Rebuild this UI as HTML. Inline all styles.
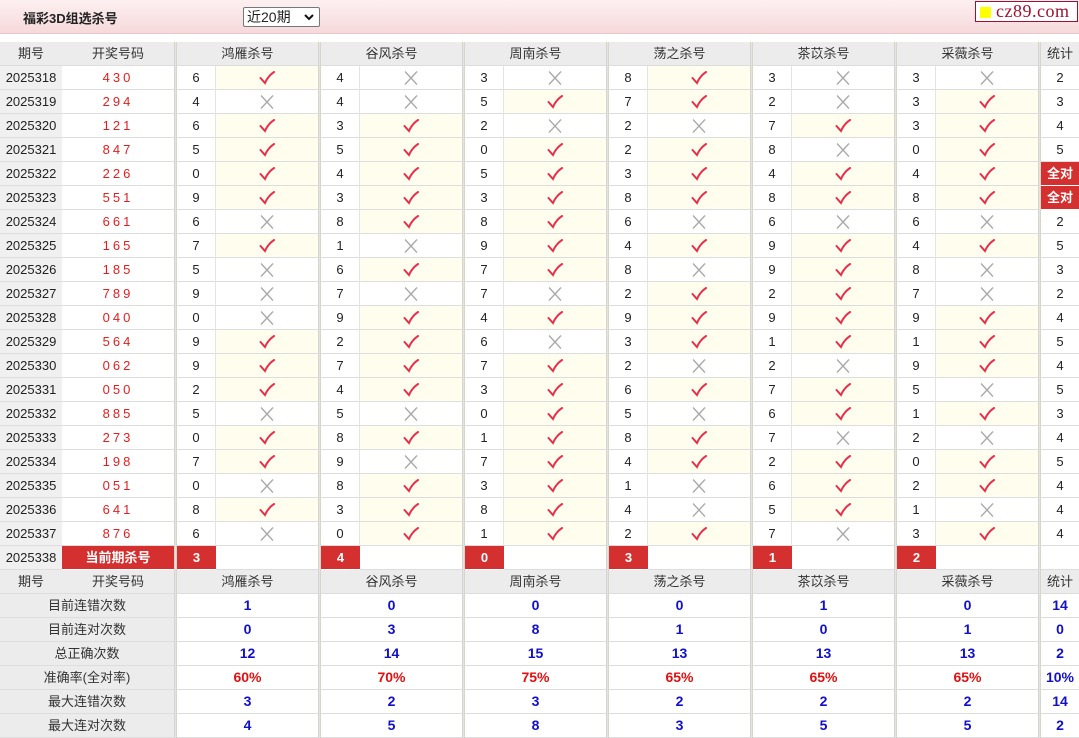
<!DOCTYPE html>
<html><head><meta charset="utf-8">
<style>
*{margin:0;padding:0;box-sizing:border-box}
body{width:1079px;height:737px;overflow:hidden;background:#fff;font-family:"Liberation Sans","Noto Sans CJK SC",sans-serif;font-size:13px;color:#222}
.top{position:absolute;left:0;top:0;width:1079px;height:34px;background:linear-gradient(#fdf0f1,#f6d9db);border-bottom:1px solid #e6c6c8}
.tt{position:absolute;left:23px;top:8px;font-weight:bold;font-size:13px;color:#222}
.sel{position:absolute;left:243px;top:7px;width:77px;height:20px;border:1px solid #777;background:#fff;font-size:14px;padding-left:3px;line-height:18px;border-radius:2px}
.sel svg{position:absolute;right:5px;top:6px}
.logo{position:absolute;left:975px;top:1px;width:103px;height:21px;border:1px solid #a01030;background:#fff;font-family:"Liberation Serif",serif;font-size:18px;color:#a01030;line-height:19px;padding-left:20px;letter-spacing:.5px}
.logo:before{content:"";position:absolute;left:4px;top:5px;width:11px;height:11px;background:#ff0}
.t{position:absolute;left:0;top:42px;width:1079px}
.r{display:grid;grid-template-columns:62px 112px 3px 39px 102px 3px 39px 102px 3px 39px 102px 3px 39px 102px 3px 39px 102px 3px 39px 102px 3px 38px;height:24px}
.r>div{border-bottom:1px solid #ddd;text-align:center;line-height:23px;height:24px}
.r>i{background:#e4e4dc;border-left:1px solid #d6d6ce;border-right:1px solid #d6d6ce}
.h>div{background:#ececec;color:#333}
.p{background:#f0f0f0}
.d{color:#e02020;letter-spacing:3px}
.n{border-right:1px solid #e4e4e4}
.y{background:#fffdee}
.y svg,.x svg{margin-top:5px}
.s{}
.q{background:#d43030!important;color:#fff;font-weight:bold;border-bottom:1px solid #fff!important}
.g1{grid-column:span 2}
.lb{grid-column:1/3;background:#ececec;color:#333}
.v{grid-column:span 2;color:#1010c8;font-weight:bold;font-size:14px}
.vr{color:#e01010}
.sv{color:#1010c8;font-weight:bold;font-size:14px}
</style></head><body>
<svg width="0" height="0" style="position:absolute"><defs>
<symbol id="k" viewBox="0 0 16 14"><path d="M1.5 7 L6 12 Q9 5 15 1" fill="none" stroke="#e8304a" stroke-width="2" stroke-linecap="round"/></symbol>
<symbol id="x" viewBox="0 0 16 14"><path d="M2 0.5 L14 13.5 M14 0.5 L2 13.5" fill="none" stroke="#a8a8a8" stroke-width="1.3"/></symbol>
</defs></svg>
<div class="top"><div class="tt">福彩3D组选杀号</div><div class="sel">近20期<svg width="10" height="7" viewBox="0 0 10 7"><path d="M1 1 L5 5 L9 1" fill="none" stroke="#111" stroke-width="2"/></svg></div><div class="logo">cz89.com</div></div>
<div class="t">
<div class="r h"><div>期号</div><div>开奖号码</div><i></i><div class="g1">鸿雁杀号</div><i></i><div class="g1">谷风杀号</div><i></i><div class="g1">周南杀号</div><i></i><div class="g1">荡之杀号</div><i></i><div class="g1">茶苡杀号</div><i></i><div class="g1">采薇杀号</div><i></i><div>统计</div></div>

<div class="r"><div class="p">2025318</div><div class="d">430</div><i></i><div class="n">6</div><div class="y"><svg width="16" height="14"><use href="#k"/></svg></div><i></i><div class="n">4</div><div class="x"><svg width="16" height="14"><use href="#x"/></svg></div><i></i><div class="n">3</div><div class="x"><svg width="16" height="14"><use href="#x"/></svg></div><i></i><div class="n">8</div><div class="y"><svg width="16" height="14"><use href="#k"/></svg></div><i></i><div class="n">3</div><div class="x"><svg width="16" height="14"><use href="#x"/></svg></div><i></i><div class="n">3</div><div class="x"><svg width="16" height="14"><use href="#x"/></svg></div><i></i><div class="s">2</div></div>

<div class="r"><div class="p">2025319</div><div class="d">294</div><i></i><div class="n">4</div><div class="x"><svg width="16" height="14"><use href="#x"/></svg></div><i></i><div class="n">4</div><div class="x"><svg width="16" height="14"><use href="#x"/></svg></div><i></i><div class="n">5</div><div class="y"><svg width="16" height="14"><use href="#k"/></svg></div><i></i><div class="n">7</div><div class="y"><svg width="16" height="14"><use href="#k"/></svg></div><i></i><div class="n">2</div><div class="x"><svg width="16" height="14"><use href="#x"/></svg></div><i></i><div class="n">3</div><div class="y"><svg width="16" height="14"><use href="#k"/></svg></div><i></i><div class="s">3</div></div>

<div class="r"><div class="p">2025320</div><div class="d">121</div><i></i><div class="n">6</div><div class="y"><svg width="16" height="14"><use href="#k"/></svg></div><i></i><div class="n">3</div><div class="y"><svg width="16" height="14"><use href="#k"/></svg></div><i></i><div class="n">2</div><div class="x"><svg width="16" height="14"><use href="#x"/></svg></div><i></i><div class="n">2</div><div class="x"><svg width="16" height="14"><use href="#x"/></svg></div><i></i><div class="n">7</div><div class="y"><svg width="16" height="14"><use href="#k"/></svg></div><i></i><div class="n">3</div><div class="y"><svg width="16" height="14"><use href="#k"/></svg></div><i></i><div class="s">4</div></div>

<div class="r"><div class="p">2025321</div><div class="d">847</div><i></i><div class="n">5</div><div class="y"><svg width="16" height="14"><use href="#k"/></svg></div><i></i><div class="n">5</div><div class="y"><svg width="16" height="14"><use href="#k"/></svg></div><i></i><div class="n">0</div><div class="y"><svg width="16" height="14"><use href="#k"/></svg></div><i></i><div class="n">2</div><div class="y"><svg width="16" height="14"><use href="#k"/></svg></div><i></i><div class="n">8</div><div class="x"><svg width="16" height="14"><use href="#x"/></svg></div><i></i><div class="n">0</div><div class="y"><svg width="16" height="14"><use href="#k"/></svg></div><i></i><div class="s">5</div></div>

<div class="r"><div class="p">2025322</div><div class="d">226</div><i></i><div class="n">0</div><div class="y"><svg width="16" height="14"><use href="#k"/></svg></div><i></i><div class="n">4</div><div class="y"><svg width="16" height="14"><use href="#k"/></svg></div><i></i><div class="n">5</div><div class="y"><svg width="16" height="14"><use href="#k"/></svg></div><i></i><div class="n">3</div><div class="y"><svg width="16" height="14"><use href="#k"/></svg></div><i></i><div class="n">4</div><div class="y"><svg width="16" height="14"><use href="#k"/></svg></div><i></i><div class="n">4</div><div class="y"><svg width="16" height="14"><use href="#k"/></svg></div><i></i><div class="s q">全对</div></div>

<div class="r"><div class="p">2025323</div><div class="d">551</div><i></i><div class="n">9</div><div class="y"><svg width="16" height="14"><use href="#k"/></svg></div><i></i><div class="n">3</div><div class="y"><svg width="16" height="14"><use href="#k"/></svg></div><i></i><div class="n">3</div><div class="y"><svg width="16" height="14"><use href="#k"/></svg></div><i></i><div class="n">8</div><div class="y"><svg width="16" height="14"><use href="#k"/></svg></div><i></i><div class="n">8</div><div class="y"><svg width="16" height="14"><use href="#k"/></svg></div><i></i><div class="n">8</div><div class="y"><svg width="16" height="14"><use href="#k"/></svg></div><i></i><div class="s q">全对</div></div>

<div class="r"><div class="p">2025324</div><div class="d">661</div><i></i><div class="n">6</div><div class="x"><svg width="16" height="14"><use href="#x"/></svg></div><i></i><div class="n">8</div><div class="y"><svg width="16" height="14"><use href="#k"/></svg></div><i></i><div class="n">8</div><div class="y"><svg width="16" height="14"><use href="#k"/></svg></div><i></i><div class="n">6</div><div class="x"><svg width="16" height="14"><use href="#x"/></svg></div><i></i><div class="n">6</div><div class="x"><svg width="16" height="14"><use href="#x"/></svg></div><i></i><div class="n">6</div><div class="x"><svg width="16" height="14"><use href="#x"/></svg></div><i></i><div class="s">2</div></div>

<div class="r"><div class="p">2025325</div><div class="d">165</div><i></i><div class="n">7</div><div class="y"><svg width="16" height="14"><use href="#k"/></svg></div><i></i><div class="n">1</div><div class="x"><svg width="16" height="14"><use href="#x"/></svg></div><i></i><div class="n">9</div><div class="y"><svg width="16" height="14"><use href="#k"/></svg></div><i></i><div class="n">4</div><div class="y"><svg width="16" height="14"><use href="#k"/></svg></div><i></i><div class="n">9</div><div class="y"><svg width="16" height="14"><use href="#k"/></svg></div><i></i><div class="n">4</div><div class="y"><svg width="16" height="14"><use href="#k"/></svg></div><i></i><div class="s">5</div></div>

<div class="r"><div class="p">2025326</div><div class="d">185</div><i></i><div class="n">5</div><div class="x"><svg width="16" height="14"><use href="#x"/></svg></div><i></i><div class="n">6</div><div class="y"><svg width="16" height="14"><use href="#k"/></svg></div><i></i><div class="n">7</div><div class="y"><svg width="16" height="14"><use href="#k"/></svg></div><i></i><div class="n">8</div><div class="x"><svg width="16" height="14"><use href="#x"/></svg></div><i></i><div class="n">9</div><div class="y"><svg width="16" height="14"><use href="#k"/></svg></div><i></i><div class="n">8</div><div class="x"><svg width="16" height="14"><use href="#x"/></svg></div><i></i><div class="s">3</div></div>

<div class="r"><div class="p">2025327</div><div class="d">789</div><i></i><div class="n">9</div><div class="x"><svg width="16" height="14"><use href="#x"/></svg></div><i></i><div class="n">7</div><div class="x"><svg width="16" height="14"><use href="#x"/></svg></div><i></i><div class="n">7</div><div class="x"><svg width="16" height="14"><use href="#x"/></svg></div><i></i><div class="n">2</div><div class="y"><svg width="16" height="14"><use href="#k"/></svg></div><i></i><div class="n">2</div><div class="y"><svg width="16" height="14"><use href="#k"/></svg></div><i></i><div class="n">7</div><div class="x"><svg width="16" height="14"><use href="#x"/></svg></div><i></i><div class="s">2</div></div>

<div class="r"><div class="p">2025328</div><div class="d">040</div><i></i><div class="n">0</div><div class="x"><svg width="16" height="14"><use href="#x"/></svg></div><i></i><div class="n">9</div><div class="y"><svg width="16" height="14"><use href="#k"/></svg></div><i></i><div class="n">4</div><div class="y"><svg width="16" height="14"><use href="#k"/></svg></div><i></i><div class="n">9</div><div class="y"><svg width="16" height="14"><use href="#k"/></svg></div><i></i><div class="n">9</div><div class="y"><svg width="16" height="14"><use href="#k"/></svg></div><i></i><div class="n">9</div><div class="y"><svg width="16" height="14"><use href="#k"/></svg></div><i></i><div class="s">4</div></div>

<div class="r"><div class="p">2025329</div><div class="d">564</div><i></i><div class="n">9</div><div class="y"><svg width="16" height="14"><use href="#k"/></svg></div><i></i><div class="n">2</div><div class="y"><svg width="16" height="14"><use href="#k"/></svg></div><i></i><div class="n">6</div><div class="x"><svg width="16" height="14"><use href="#x"/></svg></div><i></i><div class="n">3</div><div class="y"><svg width="16" height="14"><use href="#k"/></svg></div><i></i><div class="n">1</div><div class="y"><svg width="16" height="14"><use href="#k"/></svg></div><i></i><div class="n">1</div><div class="y"><svg width="16" height="14"><use href="#k"/></svg></div><i></i><div class="s">5</div></div>

<div class="r"><div class="p">2025330</div><div class="d">062</div><i></i><div class="n">9</div><div class="y"><svg width="16" height="14"><use href="#k"/></svg></div><i></i><div class="n">7</div><div class="y"><svg width="16" height="14"><use href="#k"/></svg></div><i></i><div class="n">7</div><div class="y"><svg width="16" height="14"><use href="#k"/></svg></div><i></i><div class="n">2</div><div class="x"><svg width="16" height="14"><use href="#x"/></svg></div><i></i><div class="n">2</div><div class="x"><svg width="16" height="14"><use href="#x"/></svg></div><i></i><div class="n">9</div><div class="y"><svg width="16" height="14"><use href="#k"/></svg></div><i></i><div class="s">4</div></div>

<div class="r"><div class="p">2025331</div><div class="d">050</div><i></i><div class="n">2</div><div class="y"><svg width="16" height="14"><use href="#k"/></svg></div><i></i><div class="n">4</div><div class="y"><svg width="16" height="14"><use href="#k"/></svg></div><i></i><div class="n">3</div><div class="y"><svg width="16" height="14"><use href="#k"/></svg></div><i></i><div class="n">6</div><div class="y"><svg width="16" height="14"><use href="#k"/></svg></div><i></i><div class="n">7</div><div class="y"><svg width="16" height="14"><use href="#k"/></svg></div><i></i><div class="n">5</div><div class="x"><svg width="16" height="14"><use href="#x"/></svg></div><i></i><div class="s">5</div></div>

<div class="r"><div class="p">2025332</div><div class="d">885</div><i></i><div class="n">5</div><div class="x"><svg width="16" height="14"><use href="#x"/></svg></div><i></i><div class="n">5</div><div class="x"><svg width="16" height="14"><use href="#x"/></svg></div><i></i><div class="n">0</div><div class="y"><svg width="16" height="14"><use href="#k"/></svg></div><i></i><div class="n">5</div><div class="x"><svg width="16" height="14"><use href="#x"/></svg></div><i></i><div class="n">6</div><div class="y"><svg width="16" height="14"><use href="#k"/></svg></div><i></i><div class="n">1</div><div class="y"><svg width="16" height="14"><use href="#k"/></svg></div><i></i><div class="s">3</div></div>

<div class="r"><div class="p">2025333</div><div class="d">273</div><i></i><div class="n">0</div><div class="y"><svg width="16" height="14"><use href="#k"/></svg></div><i></i><div class="n">8</div><div class="y"><svg width="16" height="14"><use href="#k"/></svg></div><i></i><div class="n">1</div><div class="y"><svg width="16" height="14"><use href="#k"/></svg></div><i></i><div class="n">8</div><div class="y"><svg width="16" height="14"><use href="#k"/></svg></div><i></i><div class="n">7</div><div class="x"><svg width="16" height="14"><use href="#x"/></svg></div><i></i><div class="n">2</div><div class="x"><svg width="16" height="14"><use href="#x"/></svg></div><i></i><div class="s">4</div></div>

<div class="r"><div class="p">2025334</div><div class="d">198</div><i></i><div class="n">7</div><div class="y"><svg width="16" height="14"><use href="#k"/></svg></div><i></i><div class="n">9</div><div class="x"><svg width="16" height="14"><use href="#x"/></svg></div><i></i><div class="n">7</div><div class="y"><svg width="16" height="14"><use href="#k"/></svg></div><i></i><div class="n">4</div><div class="y"><svg width="16" height="14"><use href="#k"/></svg></div><i></i><div class="n">2</div><div class="y"><svg width="16" height="14"><use href="#k"/></svg></div><i></i><div class="n">0</div><div class="y"><svg width="16" height="14"><use href="#k"/></svg></div><i></i><div class="s">5</div></div>

<div class="r"><div class="p">2025335</div><div class="d">051</div><i></i><div class="n">0</div><div class="x"><svg width="16" height="14"><use href="#x"/></svg></div><i></i><div class="n">8</div><div class="y"><svg width="16" height="14"><use href="#k"/></svg></div><i></i><div class="n">3</div><div class="y"><svg width="16" height="14"><use href="#k"/></svg></div><i></i><div class="n">1</div><div class="x"><svg width="16" height="14"><use href="#x"/></svg></div><i></i><div class="n">6</div><div class="y"><svg width="16" height="14"><use href="#k"/></svg></div><i></i><div class="n">2</div><div class="y"><svg width="16" height="14"><use href="#k"/></svg></div><i></i><div class="s">4</div></div>

<div class="r"><div class="p">2025336</div><div class="d">641</div><i></i><div class="n">8</div><div class="y"><svg width="16" height="14"><use href="#k"/></svg></div><i></i><div class="n">3</div><div class="y"><svg width="16" height="14"><use href="#k"/></svg></div><i></i><div class="n">8</div><div class="y"><svg width="16" height="14"><use href="#k"/></svg></div><i></i><div class="n">4</div><div class="x"><svg width="16" height="14"><use href="#x"/></svg></div><i></i><div class="n">5</div><div class="y"><svg width="16" height="14"><use href="#k"/></svg></div><i></i><div class="n">1</div><div class="x"><svg width="16" height="14"><use href="#x"/></svg></div><i></i><div class="s">4</div></div>

<div class="r"><div class="p">2025337</div><div class="d">876</div><i></i><div class="n">6</div><div class="x"><svg width="16" height="14"><use href="#x"/></svg></div><i></i><div class="n">0</div><div class="y"><svg width="16" height="14"><use href="#k"/></svg></div><i></i><div class="n">1</div><div class="y"><svg width="16" height="14"><use href="#k"/></svg></div><i></i><div class="n">2</div><div class="y"><svg width="16" height="14"><use href="#k"/></svg></div><i></i><div class="n">7</div><div class="x"><svg width="16" height="14"><use href="#x"/></svg></div><i></i><div class="n">3</div><div class="y"><svg width="16" height="14"><use href="#k"/></svg></div><i></i><div class="s">4</div></div>

<div class="r"><div class="p">2025338</div><div class="q" style="letter-spacing:0">当前期杀号</div><i></i><div class="q">3</div><div></div><i></i><div class="q">4</div><div></div><i></i><div class="q">0</div><div></div><i></i><div class="q">3</div><div></div><i></i><div class="q">1</div><div></div><i></i><div class="q">2</div><div></div><i></i><div></div></div>

<div class="r h"><div>期号</div><div>开奖号码</div><i></i><div class="g1">鸿雁杀号</div><i></i><div class="g1">谷风杀号</div><i></i><div class="g1">周南杀号</div><i></i><div class="g1">荡之杀号</div><i></i><div class="g1">茶苡杀号</div><i></i><div class="g1">采薇杀号</div><i></i><div>统计</div></div>

<div class="r"><div class="lb">目前连错次数</div><i></i><div class="v">1</div><i></i><div class="v">0</div><i></i><div class="v">0</div><i></i><div class="v">0</div><i></i><div class="v">1</div><i></i><div class="v">0</div><i></i><div class="sv">14</div></div>
<div class="r"><div class="lb">目前连对次数</div><i></i><div class="v">0</div><i></i><div class="v">3</div><i></i><div class="v">8</div><i></i><div class="v">1</div><i></i><div class="v">0</div><i></i><div class="v">1</div><i></i><div class="sv">0</div></div>
<div class="r"><div class="lb">总正确次数</div><i></i><div class="v">12</div><i></i><div class="v">14</div><i></i><div class="v">15</div><i></i><div class="v">13</div><i></i><div class="v">13</div><i></i><div class="v">13</div><i></i><div class="sv">2</div></div>
<div class="r"><div class="lb">准确率(全对率)</div><i></i><div class="v vr">60%</div><i></i><div class="v vr">70%</div><i></i><div class="v vr">75%</div><i></i><div class="v vr">65%</div><i></i><div class="v vr">65%</div><i></i><div class="v vr">65%</div><i></i><div class="sv vr">10%</div></div>
<div class="r"><div class="lb">最大连错次数</div><i></i><div class="v">3</div><i></i><div class="v">2</div><i></i><div class="v">3</div><i></i><div class="v">2</div><i></i><div class="v">2</div><i></i><div class="v">2</div><i></i><div class="sv">14</div></div>
<div class="r"><div class="lb">最大连对次数</div><i></i><div class="v">4</div><i></i><div class="v">5</div><i></i><div class="v">8</div><i></i><div class="v">3</div><i></i><div class="v">5</div><i></i><div class="v">5</div><i></i><div class="sv">2</div></div>
</div>
</body></html>
